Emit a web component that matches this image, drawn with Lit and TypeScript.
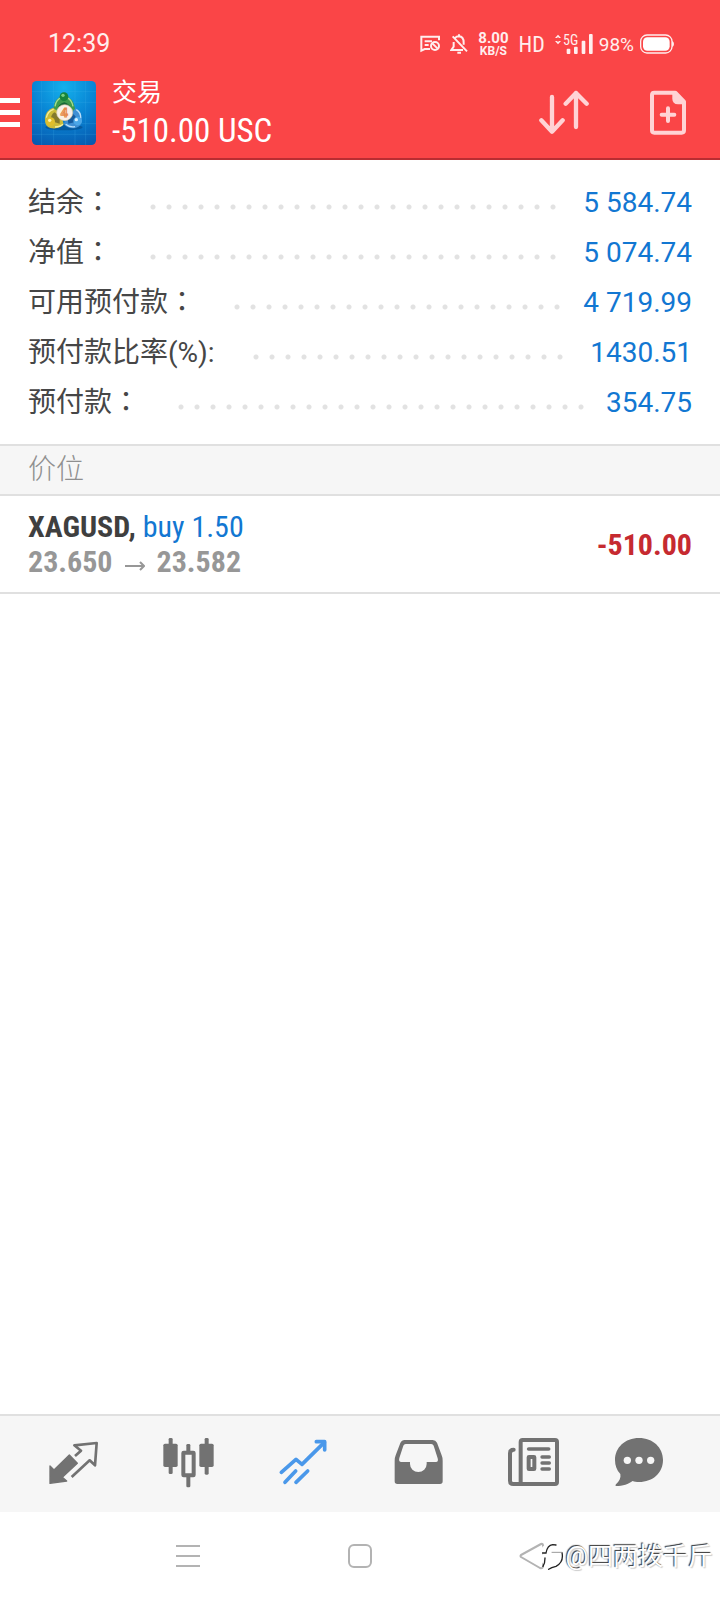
import { LitElement, html, css, svg } from "lit";
import { customElement } from "lit/decorators.js";

interface Metric {
  label: string;
  colon: string;
  value: string;
}

const METRICS: Metric[] = [
  { label: "结余", colon: "：", value: "5 584.74" },
  { label: "净值", colon: "：", value: "5 074.74" },
  { label: "可用预付款", colon: "：", value: "4 719.99" },
  { label: "预付款比率(%)", colon: ":", value: "1430.51" },
  { label: "预付款", colon: "：", value: "354.75" },
];

const TABS = [
  {
    name: "行情",
    box: "84 108 156 156",
    art: svg`
      <path fill="currentColor" stroke="currentColor" stroke-width="4" stroke-linejoin="round" d="M90 198 L102 210 L148 165 L172 190 L127 232 L140 243 L90 250Z"/>
      <path fill="none" stroke="currentColor" stroke-width="8" stroke-linejoin="round" d="M165 168 L183 152 L163 136 L230 129 L225 196 L209 181 L155 231"/>`,
  },
  {
    name: "图表",
    box: "429 108 156 156",
    art: svg`
      <g fill="currentColor">
        <rect x="446" y="114" width="12" height="108" rx="4"/><rect x="430" y="131" width="43" height="70" rx="5"/>
        <rect x="554" y="114" width="12" height="110" rx="4"/><rect x="538" y="131" width="43" height="70" rx="5"/>
        <rect x="499" y="132" width="12" height="24" rx="4"/><rect x="499" y="224" width="12" height="38" rx="4"/>
      </g>
      <rect x="490" y="158" width="31" height="68" rx="1" fill="none" stroke="currentColor" stroke-width="12" stroke-linejoin="round"/>`,
  },
  {
    name: "交易",
    box: "774 108 156 156",
    art: svg`
      <g fill="none" stroke="currentColor" stroke-width="11" stroke-linecap="round" stroke-linejoin="round">
        <path d="M784 217 L828 178 L846 193 L913 127"/><path d="M889 125 H914 V150"/>
        <path d="M795 247 L827 213"/><path d="M828 247 L863 213"/>
      </g>`,
  },
  {
    name: "历史",
    box: "99 108 156 156",
    art: svg`
      <path fill="currentColor" fill-rule="evenodd" d="M134 120 H218 Q227 120 231 128 L245 166 Q248 173 248 182 V244 Q248 252 240 252 H112 Q104 252 104 244 V182 Q104 173 107 166 L121 129 Q125 120 134 120Z M137 132 Q132 132 130 137 L118 174 Q115 186 124 186 H150 V192 A25 24 0 0 0 200 192 V186 H228 Q236 186 233 175 L221 137 Q219 132 214 132Z"/>`,
  },
  {
    name: "新闻",
    box: "444 108 156 156",
    art: svg`
      <g fill="none" stroke="currentColor" stroke-width="12" stroke-linecap="round">
        <rect x="482" y="120" width="109" height="132" rx="6"/>
        <path d="M461 149 Q450 149 450 160 V242 Q450 252 460 252 H484"/>
        <path stroke-width="11" d="M506 147 H566"/><path stroke-width="10" d="M546 171 H568 M546 189 H568 M546 207 H568"/>
        <rect x="506" y="171" width="17" height="36" rx="1"/>
      </g>`,
  },
  {
    name: "消息",
    box: "759 108 156 156",
    art: svg`
      <path fill="currentColor" d="M837 114 C879 114 909 143 909 180 C909 218 879 246 837 246 C829 246 823 245 818 243 C806 252 788 258 768 258 Q764 257 768 253 C779 243 783 233 781 222 C770 211 765 196 765 180 C765 143 795 114 837 114Z"/>
      <g fill="#f6f6f6"><circle cx="802" cy="181" r="11"/><circle cx="837" cy="181" r="11"/><circle cx="872" cy="181" r="11"/></g>`,
  },
];

const sheet = css`
  :host {
    display: block;
    font-family: Roboto, "Noto Sans CJK SC", sans-serif;
  }
  svg {
    display: block;
    flex: none;
  }
  button {
    display: block;
    margin: 0;
    padding: 0;
    border: 0;
    background: none;
    color: inherit;
    font: inherit;
    cursor: pointer;
  }
`;

@customElement("status-bar")
class StatusBar extends LitElement {
  static styles = [
    sheet,
    css`
      .bar {
        display: flex;
        align-items: center;
        gap: 10px;
        padding: 22px 46px 0 48px;
        color: #ffeeee;
      }
      .clock {
        flex: 1;
        font-size: 25px;
        line-height: 44px;
      }
      .speed {
        font-size: 15px;
        line-height: 14px;
        font-weight: 700;
        text-align: center;
      }
      .unit {
        display: block;
        font-size: 12px;
        line-height: 12px;
      }
      .hd {
        font-family: "Roboto Condensed", Roboto, sans-serif;
        font-size: 22px;
      }
      .power {
        display: flex;
        align-items: center;
        gap: 6px;
        font-size: 19px;
      }
    `,
  ];

  render() {
    return html`
      <div class="bar">
        <span class="clock">12:39</span>
        <svg width="20" height="18" viewBox="46 46 60 54" fill="none" stroke="currentColor" stroke-width="6" aria-hidden="true">
          <path d="M103 62 V51 H50 V93 L60 88 H76 M60 65 H82 M60 76 H72" />
          <circle cx="91" cy="79" r="12" /><path d="M83 71 L99 87" />
        </svg>
        <svg width="18" height="20" viewBox="139 42 54 60" fill="none" stroke="currentColor" stroke-width="6" aria-hidden="true">
          <path d="M154 54 Q158 49 166 49 Q180 50 180 68 V74 M150 66 V80 L143 90 H178 M147 49 L190 94" />
          <path d="M161 98 H172 M166 43 V48" />
        </svg>
        <span class="speed">8.00<span class="unit">KB/S</span></span>
        <span class="hd">HD</span>
        <span class="power">
          <svg width="38" height="22" viewBox="456 39 114 66" fill="currentColor" role="img" aria-label="5G 信号">
            <path d="M456 54 L465 44 L474 54 H468 L465 51 L462 54Z M456 63 L465 73 L474 63 H468 L465 66 L462 63Z" />
            <text x="480" y="76" font-size="42" font-family="Roboto Condensed, Roboto">5G</text>
            <rect x="491" y="86" width="11" height="16" rx="3" /><rect x="513" y="80" width="11" height="22" rx="3" />
            <rect x="536" y="62" width="11" height="40" rx="3" /><rect x="558" y="42" width="11" height="60" rx="3" />
          </svg>
          98%
          <svg width="34" height="20" viewBox="720 43 102 60" aria-hidden="true">
            <rect x="722" y="46" width="94" height="54" rx="19" fill="none" stroke="currentColor" stroke-width="4" />
            <rect x="729" y="53" width="80" height="40" rx="13" fill="#fff" />
            <path d="M816 64 Q822 66 822 73 Q822 80 816 82Z" fill="currentColor" />
          </svg>
        </span>
      </div>
    `;
  }
}

@customElement("trade-header")
class TradeHeader extends LitElement {
  static styles = [
    sheet,
    css`
      .row {
        display: flex;
        align-items: center;
        padding: 9px 34px 7px 0;
        color: #fff;
      }
      .logo {
        margin: 0 16px 0 12px;
      }
      .titles {
        flex: 1;
      }
      .title {
        margin: 0;
        font-size: 25px;
        line-height: 35px;
        font-weight: 400;
      }
      .total {
        margin: 0;
        font-family: "Roboto Condensed", "Liberation Sans Narrow", Roboto, sans-serif;
        font-size: 33px;
        line-height: 41px;
      }
      .actions {
        display: flex;
        gap: 61px;
        color: #ffd3d5;
      }
    `,
  ];

  render() {
    return html`
      <div class="row">
        <button aria-label="菜单">
          <svg width="20" height="30" viewBox="0 0 20 30" fill="#fff">
            <rect width="20" height="5" /><rect y="12" width="20" height="5" /><rect y="24" width="20" height="5" />
          </svg>
        </button>
        <svg class="logo" width="64" height="64" viewBox="21 30 192 192" aria-hidden="true">
          <defs>
            <radialGradient id="sky" cx="0.5" cy="0.1" r="1">
              <stop offset="0" stop-color="#14b0ec" /><stop offset="0.5" stop-color="#0883d3" /><stop offset="1" stop-color="#0758ad" />
            </radialGradient>
          </defs>
          <rect x="21" y="30" width="192" height="192" rx="14" fill="url(#sky)" />
          <path d="M50 30 V222 M86 30 V222 M150 30 V222 M182 30 V222 M21 62 H213 M21 94 H213 M21 158 H213 M21 190 H213" stroke="#4db9ef" stroke-opacity="0.3" stroke-width="2" />
          <ellipse cx="117" cy="169" rx="56" ry="9" fill="#043f77" opacity="0.5" />
          <path d="M86 126 Q82 92 104 78 Q117 66 130 78 Q152 92 150 126Z" fill="#3d9a4c" />
          <path d="M98 122 Q96 100 118 94 Q138 100 138 122Z" fill="#176636" />
          <path d="M90 106 Q94 84 110 80 M144 106 Q140 86 126 80" fill="none" stroke="#a4dc92" stroke-width="4" />
          <path d="M84 110 Q62 118 60 142 Q58 166 76 171 Q102 176 116 160 L108 128Z" fill="#cbbb3a" />
          <path d="M88 124 Q76 132 78 150 L104 158 L104 134Z" fill="#83792c" />
          <path d="M64 140 Q68 120 86 115 M90 168 Q106 168 114 160" fill="none" stroke="#f6ee9a" stroke-width="4" />
          <path d="M152 112 Q170 120 171 144 Q171 166 152 171 Q126 174 116 158 L132 132Z" fill="#3f8fd4" />
          <path d="M142 128 Q156 134 154 152 L130 158 L128 142Z" fill="#155a9e" />
          <path d="M154 116 Q168 124 167 142 M122 160 Q134 170 150 167" fill="none" stroke="#b9e0fa" stroke-width="4" />
          <circle cx="117" cy="77" r="13" fill="#17843a" /><circle cx="114" cy="73" r="5" fill="#79cf80" />
          <circle cx="77" cy="152" r="13" fill="#dfbe2c" /><circle cx="74" cy="148" r="5" fill="#fff6b0" />
          <circle cx="158" cy="150" r="13" fill="#4ba7e8" /><circle cx="154" cy="146" r="5" fill="#d7f0ff" />
          <circle cx="119" cy="125" r="24" fill="#f8f0e8" stroke="#d8c8a8" stroke-width="2" />
          <text x="118" y="139" text-anchor="middle" font-family="Roboto" font-size="39" font-weight="700" fill="#fbd5b4" stroke="#e58a4c" stroke-width="3">4</text>
        </svg>
        <div class="titles">
          <h1 class="title">交易</h1>
          <p class="total">-510.00 USC</p>
        </div>
        <div class="actions">
          <button aria-label="排序">
            <svg width="50" height="46" viewBox="417 208 150 138" fill="none" stroke="currentColor" stroke-width="13" stroke-linecap="round" stroke-linejoin="round">
              <path d="M456 229 V332 M424 299 L456 333 L488 299 M528 319 V217 M497 249 L528 217 L560 249" />
            </svg>
          </button>
          <button aria-label="新订单">
            <svg width="36" height="46" viewBox="750 208 108 138" fill="none" stroke="currentColor" stroke-width="12">
              <path d="M763 216 H826 L852 243 V329 Q852 336 845 336 H763 Q756 336 756 329 V223 Q756 216 763 216Z" stroke-linejoin="round" />
              <path d="M817 216 L828 216 L852 241 V251 H834 Q817 250 817 234Z" fill="currentColor" stroke="none" />
              <path d="M804 263 V301 M785 282 H823" stroke-width="12" stroke-linecap="round" />
            </svg>
          </button>
        </div>
      </div>
    `;
  }
}

@customElement("account-summary")
class AccountSummary extends LitElement {
  static styles = [
    sheet,
    css`
      .list {
        margin: 0;
        padding: 18px 28px 16px;
        font-size: 28px;
        line-height: 50px;
      }
      .line {
        display: flex;
        align-items: center;
      }
      .label {
        color: #464646;
        font-weight: 400;
      }
      .colon {
        font-family: Roboto, "Noto Sans CJK TC", sans-serif;
      }
      .dots {
        flex: 1;
        height: 6px;
        margin: 8px 20px 0 33px;
        background: radial-gradient(circle, #e2e2e2 2px, transparent 3px) 0 0 / 16px 6px repeat-x;
      }
      .value {
        margin: 0;
        color: #1277d2;
      }
    `,
  ];

  render() {
    return html`
      <dl class="list">
        ${METRICS.map(
          (m) => html`
            <div class="line">
              <dt class="label">${m.label}<span class="colon" lang="zh-Hant">${m.colon}</span></dt>
              <span class="dots" aria-hidden="true"></span>
              <dd class="value">${m.value}</dd>
            </div>
          `
        )}
      </dl>
    `;
  }
}

@customElement("position-list")
class PositionList extends LitElement {
  static styles = [
    sheet,
    css`
      .heading {
        margin: 0;
        padding: 0 28px;
        border: solid #e0e0e0;
        border-width: 2px 0;
        background: #f6f6f6;
        color: #8f8f8f;
        font-size: 28px;
        line-height: 48px;
        font-weight: 300;
      }
      .position {
        display: flex;
        align-items: center;
        justify-content: space-between;
        padding: 13px 28px;
        border-bottom: 2px solid #e0e0e0;
        font-family: "Roboto Condensed", "Liberation Sans Narrow", Roboto, sans-serif;
        font-size: 30px;
        line-height: 35px;
        font-weight: 700;
      }
      .symbol {
        color: #3f3f3f;
      }
      .side {
        color: #1277d2;
        font-weight: 400;
      }
      .prices {
        display: flex;
        align-items: center;
        gap: 12px;
        color: #979797;
      }
      .arrow {
        margin-top: 8px;
      }
      .profit {
        color: #c62a30;
      }
    `,
  ];

  render() {
    return html`
      <h2 class="heading">价位</h2>
      <div class="position">
        <div>
          <div class="symbol">XAGUSD, <span class="side">buy 1.50</span></div>
          <div class="prices">
            <span>23.650</span>
            <svg class="arrow" width="20" height="12" viewBox="0 0 20 12" fill="none" stroke="currentColor" stroke-width="2" role="img" aria-label="至">
              <path d="M0 6 H19 M15 2 L19 6 L15 10" />
            </svg>
            <span>23.582</span>
          </div>
        </div>
        <span class="profit">-510.00</span>
      </div>
    `;
  }
}

@customElement("tab-bar")
class TabBar extends LitElement {
  static styles = [
    sheet,
    css`
      .tabs {
        display: grid;
        grid-template-columns: repeat(5, 115fr) 96fr;
        padding: 20px 33px 24px 16px;
        border-top: 2px solid #e0e0e0;
        background: #f6f6f6;
        color: #727272;
      }
      .tab {
        justify-self: center;
      }
      .active {
        color: #4a98ea;
      }
    `,
  ];

  render() {
    return html`
      <nav class="tabs">
        ${TABS.map(
          (t, i) => html`
            <button class="tab ${i === 2 ? "active" : ""}" aria-label=${t.name}>
              <svg width="52" height="52" viewBox=${t.box}>${t.art}</svg>
            </button>
          `
        )}
      </nav>
    `;
  }
}

@customElement("system-bar")
class SystemBar extends LitElement {
  static styles = [
    sheet,
    css`
      .bar {
        position: relative;
        display: grid;
        grid-template-columns: repeat(3, 1fr);
        justify-items: center;
        align-items: center;
        padding: 30px 102px;
        background: #fff;
        color: #b3b3b3;
      }
      .credit {
        position: absolute;
        right: 7px;
        top: 26px;
        display: flex;
        align-items: center;
        color: #fff;
        font-size: 25px;
        line-height: 38px;
        text-shadow: -1px -1px 1px #333, 1px 1px 1px #ccc;
      }
    `,
  ];

  render() {
    return html`
      <div class="bar">
        <button aria-label="最近任务">
          <svg width="24" height="24" viewBox="0 0 24 24" stroke="currentColor" stroke-width="2">
            <path d="M0 2 H24 M0 12 H24 M0 22 H24" />
          </svg>
        </button>
        <button aria-label="主屏幕">
          <svg width="24" height="24" viewBox="0 0 24 24" fill="none" stroke="currentColor" stroke-width="2">
            <rect x="1" y="1" width="22" height="22" rx="5" />
          </svg>
        </button>
        <button aria-label="返回">
          <svg width="26" height="28" viewBox="0 0 26 28" fill="none" stroke="currentColor" stroke-width="2" stroke-linejoin="round">
            <path d="M22 2 L2 13 Q1 14 2 15 L21 26 Q24 27 24 24 V4 Q24 1 22 2Z" />
          </svg>
        </button>
        <div class="credit">
          <svg width="24" height="30" viewBox="118 130 72 90" fill="none" stroke-linecap="round" aria-hidden="true">
            <path d="M124 148 V162 M124 170 V190" stroke="#fff" stroke-width="12" />
            <path d="M119 163 H130 Q134 140 150 138 L160 139 M127 178 Q127 194 121 203 M178 162 Q184 190 160 203 Q146 206 138 212" stroke="#222" stroke-width="4" />
            <path d="M148 161 H178" stroke="#999" stroke-width="3" />
          </svg>
          <span>@四两拨千斤</span>
        </div>
      </div>
    `;
  }
}

@customElement("app-root")
class AppRoot extends LitElement {
  static styles = [
    sheet,
    css`
      .screen {
        display: flex;
        flex-direction: column;
        min-height: 100vh;
        background: #fff;
      }
      .top {
        background: #fa4547;
        border-bottom: 2px solid #b92d32;
      }
      .content {
        flex: 1;
      }
    `,
  ];

  render() {
    return html`
      <div class="screen">
        <header class="top">
          <status-bar></status-bar>
          <trade-header></trade-header>
        </header>
        <main class="content">
          <account-summary></account-summary>
          <position-list></position-list>
        </main>
        <footer>
          <tab-bar></tab-bar>
          <system-bar></system-bar>
        </footer>
      </div>
    `;
  }
}
